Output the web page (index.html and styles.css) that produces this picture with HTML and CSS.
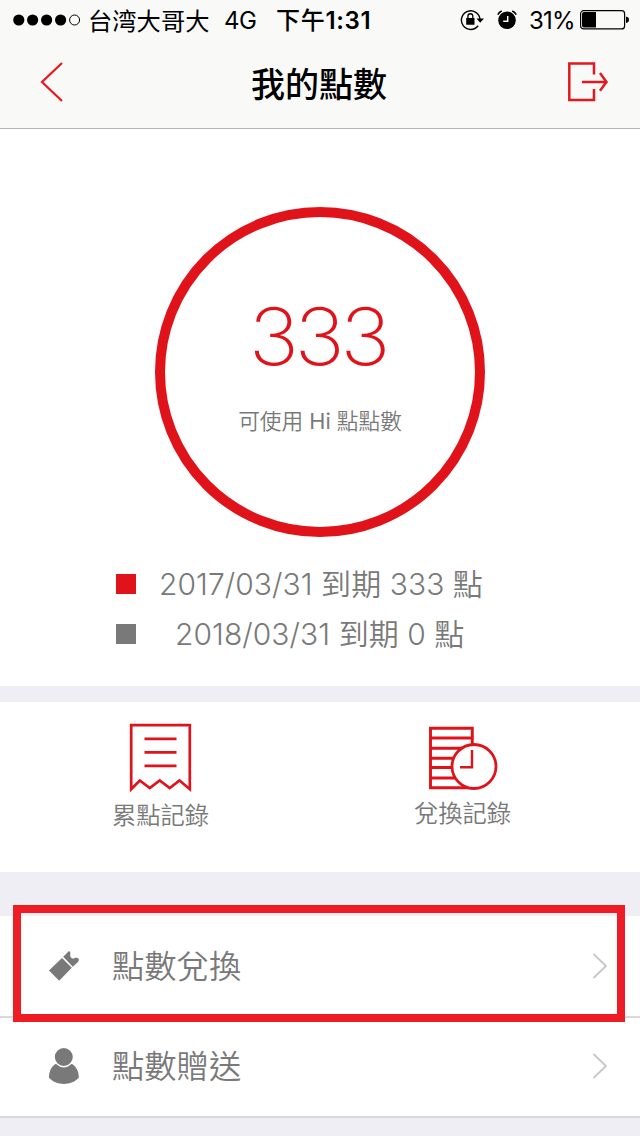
FILE: index.html
```html
<!DOCTYPE html>
<html lang="zh-Hant">
<head>
<meta charset="utf-8">
<title>我的點數</title>
<link rel="stylesheet" href="styles.css">
</head>
<body>
<main class="screen">
  <header class="top">
    <div class="status">
      <svg class="signal" width="68" height="12" viewBox="0 0 68 12"><circle cx="5.8" cy="6" r="5.6"/><circle cx="19.6" cy="6" r="5.6"/><circle cx="33.6" cy="6" r="5.6"/><circle cx="47.6" cy="6" r="5.6"/><circle cx="61.6" cy="6" r="5" fill="none" stroke="#000"/></svg>
      <span class="carrier">台湾大哥大</span>
      <span class="network">4G</span>
      <span class="time"><span class="ampm">下午</span>1:31</span>
      <svg class="lock" width="24" height="22" viewBox="0 0 24 22"><path d="M18.1 16.8A9.3 9.3 0 1 1 20 10.5" fill="none" stroke="#000" stroke-width="1.4"/><path d="M16.5 9.5h7.500l-3.800 4.300zM6.200 9h8.300v6.800H6.200z"/><path d="M7.900 9.500V7.200a2.450 2.450 0 0 1 4.900 0v2.300" fill="none" stroke="#000" stroke-width="1.3"/></svg>
      <svg class="alarm" width="20" height="20" viewBox="0 0 20 20"><circle cx="10" cy="10.3" r="8.8"/><path d="M.8 4.6A8 8 0 0 1 4.8 1M15.2 1a8 8 0 0 1 4 3.6" fill="none" stroke="#000" stroke-width="1.6"/><path d="M10.7 6v5.3H6.2" fill="none" stroke="#fff" stroke-width="1.5"/></svg>
      <span class="percent">31%</span>
      <svg class="battery" width="50" height="20" viewBox="0 0 50 20"><rect x=".6" y=".7" width="44" height="18.2" rx="3" fill="none" stroke="#000" stroke-width="1.2"/><path d="M4 2h12v15.6H4a2 2 0 0 1-2-2V4a2 2 0 0 1 2-2zM46 6.500q3 .6 3 3.300t-3 3.300z"/></svg>
    </div>
    <nav class="nav">
      <svg class="back" width="24" height="42" viewBox="0 0 24 42"><path d="M22 2 2 21l20 19" fill="none" stroke="#ec151c" stroke-width="2.2"/></svg>
      <h1 class="title">我的點數</h1>
      <svg class="exit" width="42" height="42" viewBox="0 0 42 42"><path d="M27 13.500V2.500H2.300v36.500H27V28M15 21h24.500M33 12l6.500 9-6.500 8.800" fill="none" stroke="#e2191f" stroke-width="2.500"/></svg>
    </nav>
  </header>

  <section class="summary">
    <div class="ring">
      <div class="points">333</div>
      <div class="caption">可使用 <span class="hi">Hi</span> 點點數</div>
    </div>
    <ul class="expiry">
      <li class="expiry-row"><i class="mark mark-red"></i><span class="expiry-text first">2017/03/31 到期 333 點</span></li>
      <li class="expiry-row"><i class="mark"></i><span class="expiry-text second">2018/03/31 到期 0 點</span></li>
    </ul>
  </section>

  <section class="records">
    <a class="record">
      <svg width="64" height="70" viewBox="0 0 64 70"><path d="M2.200 2.200h58.600v64L50.500 57.500 40.700 65l-10-7.500L20.800 65l-10-7.500-8.600 8.700zM15.500 15.800h32M15.500 29.300h32M15.500 42.800h32" fill="none" stroke="#e0131a" stroke-width="2.700"/></svg>
      <span class="record-label">累點記錄</span>
    </a>
    <a class="record record-swap">
      <svg width="70" height="66" viewBox="0 0 70 66"><path d="M2.500 3.300h41.800v59.500H2.500zM2.500 13h41.800M2.500 23.200h41.800M2.500 33.300h41.800M2.500 42.500h41.800M2.500 53h41.800" fill="none" stroke="#e0131a" stroke-width="2.900"/><circle cx="46" cy="41.500" r="22" fill="#fff" stroke="#e0131a" stroke-width="2.800"/><path d="M44 25v17.200H32" fill="none" stroke="#e0131a" stroke-width="2.400"/></svg>
      <span class="record-label">兌換記錄</span>
    </a>
  </section>

  <section class="menu">
    <a class="item">
      <svg class="item-icon" width="32" height="36" viewBox="0 0 32 36"><path d="M1 22.600 14 10 23.800 19.800 11.200 32.800zM15.200 8.800l5.800-5.700c1.300 1 1.800 1.800 1.300 3.200-.8 2.700 1.900 5.100 4.200 4 1.500-.8 3.400-.5 4.200.8.500 1.400-.2 2.300-1 3.100l-4.900 4.500z" fill="#797979"/></svg>
      <span class="item-label">點數兌換</span>
      <svg class="chevron" width="16" height="28" viewBox="0 0 16 28"><path d="M1.500 2 14 14 1.500 26" fill="none" stroke="#c7c7c7" stroke-width="1.8"/></svg>
    </a>
    <a class="item">
      <svg class="item-icon" width="32" height="36" viewBox="0 0 32 36"><path d="M7.500 16C3.500 18.500 1 23 1 29.500c6.500 8.600 23.200 8.600 29.800 0 0-6.500-2.800-11-6.700-13.500z" fill="#797979"/><circle cx="15.800" cy="9" r="9.700" fill="#797979" stroke="#fff" stroke-width="1.400"/></svg>
      <span class="item-label">點數贈送</span>
      <svg class="chevron" width="16" height="28" viewBox="0 0 16 28"><path d="M1.500 2 14 14 1.500 26" fill="none" stroke="#c7c7c7" stroke-width="1.8"/></svg>
    </a>
    <div class="highlight"></div>
  </section>
</main>
</body>
</html>
```
FILE: styles.css
```css
* { box-sizing: border-box; }
body { margin: 0; font-family: Inter, "Noto Sans CJK TC", sans-serif; }
.screen { width: 640px; height: 1136px; overflow: hidden; background: #efeef4; color: #797979; white-space: nowrap; }
svg { display: block; flex: none; }
.top { height: 129px; background: #f9f9f8; border-bottom: 1px solid #b2b2b2; color: #000; }
.status { height: 40px; padding-left: 13px; display: flex; align-items: center; font-size: 24px; line-height: 40px; }
.status span { padding-top: 1px; }
.carrier { width: 122px; margin-left: 7px; font-size: 24.3px; }
.network { width: 34px; margin-left: 14px; letter-spacing: -.5px; }
.time { width: 97px; margin-left: 18px; font-weight: 600; letter-spacing: .7px; }
.ampm { font-weight: 500; }
.lock { margin-left: 87px; }
.alarm { margin-left: 13px; }
.percent { width: 45px; margin-left: 12px; letter-spacing: -.8px; }
.battery { margin-left: 6px; }
.nav { height: 88px; padding: 0 31px 4px 40px; display: flex; align-items: center; }
.title { margin: 0 0 0 187px; padding-top: 6px; font-size: 34px; font-weight: 500; line-height: 50px; }
.exit { margin-left: auto; }
.summary { height: 557px; padding-top: 78px; background: #fff; }
.ring { width: 330px; height: 330px; margin: 0 auto; padding-top: 69px; border: 10px solid #e0131a; border-radius: 50%; text-align: center; }
.points { height: 100px; padding-right: 5px; line-height: 100px; font-size: 79px; font-weight: 200; letter-spacing: -4.200px; transform: scaleX(1.070); transform-origin: 155px 50%; color: #e0131a; }
.caption { margin-top: 19px; height: 32px; line-height: 32px; font-size: 21.700px; font-weight: 350; }
.hi { font-weight: 400; }
.expiry { margin: 21px 0 0; padding: 0 0 0 116px; list-style: none; font-size: 30px; font-weight: 350; }
.expiry-row { height: 50px; display: flex; align-items: center; }
.mark { width: 20px; height: 20px; margin-top: 2px; background: #797979; }
.mark-red { background: #e0131a; }
.expiry-text { padding-top: 2px; line-height: 48px; letter-spacing: .05px; }
.first { margin-left: 23px; }
.second { margin-left: 39px; }
.records { height: 170px; margin-top: 16px; padding: 21px 10px 0; display: grid; grid-template-columns: 301px 303px; background: #fff; }
.record { display: flex; flex-direction: column; align-items: center; }
.record-swap { padding-top: 2px; }
.record-label { height: 40px; margin-top: 2px; line-height: 40px; font-size: 24.300px; font-weight: 350; }
.menu { position: relative; margin-top: 44px; }
.item { height: 102px; padding: 0 32px 0 48px; display: flex; align-items: center; background: #fff; border-bottom: 2px solid #d9d9d9; }
.item + .item { height: 100px; padding-bottom: 2px; }
.item-label { margin-left: 32px; padding-top: 2px; font-size: 32.300px; font-weight: 350; line-height: 60px; }
.chevron { margin-left: auto; }
.highlight { position: absolute; left: 13px; top: -11px; width: 612px; height: 117px; border: 8px solid #ee1c24; }
```
